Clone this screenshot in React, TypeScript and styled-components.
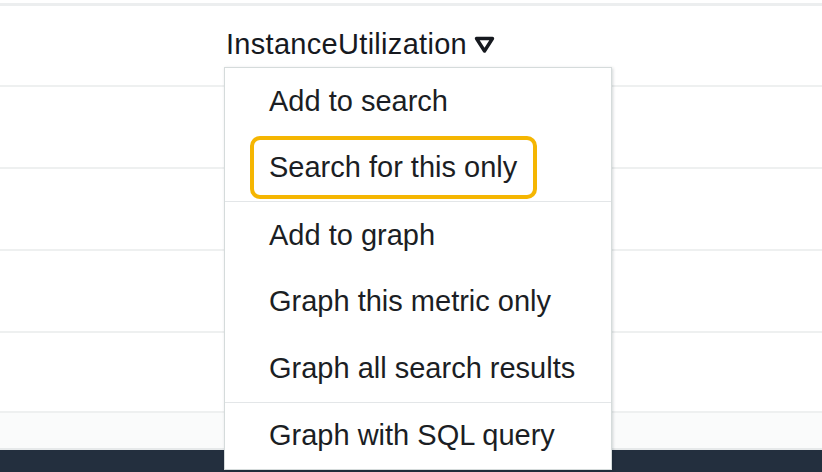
import styled, { createGlobalStyle } from "styled-components";

const GlobalStyle = createGlobalStyle`
  html, body {
    margin: 0;
    padding: 0;
    background: #ffffff;
  }

  body {
    font-family: "Liberation Sans", Arial, Helvetica, sans-serif;
    color: #16191f;
  }
`;

const MENU_GROUPS = [
  ["Add to search", "Search for this only"],
  ["Add to graph", "Graph this metric only", "Graph all search results"],
  ["Graph with SQL query"],
];

const FOCUSED = "Search for this only";

const SortIcon = () => (
  <svg width="21" height="18" viewBox="0 0 21 18" aria-hidden="true">
    <path
      d="M2.5 2.5 H18.5 L10.5 15 Z"
      fill="none"
      stroke="currentColor"
      strokeWidth="3.4"
      strokeLinejoin="round"
    />
  </svg>
);

const App = () => {
  return (
    <Page>
      <GlobalStyle />
      <Table>
        <HeaderRow>
          <ColumnTitle>
            InstanceUtilization
            <SortIcon />
          </ColumnTitle>
        </HeaderRow>
        <Row />
        <Row />
        <Row />
        <Row $height={78} />
        <Row $shaded $fill />
      </Table>
      <Footer />

      <Menu role="menu">
        {MENU_GROUPS.map((group, i) => (
          <MenuGroup key={i} $first={i === 0}>
            {group.map((label) =>
              label === FOCUSED ? (
                <MenuItem key={label} role="menuitem" $focused>
                  <FocusRing>{label}</FocusRing>
                </MenuItem>
              ) : (
                <MenuItem key={label} role="menuitem">
                  {label}
                </MenuItem>
              )
            )}
          </MenuGroup>
        ))}
      </Menu>
    </Page>
  );
};

const Page = styled.div`
  position: relative;
  width: 822px;
  height: 472px;
  padding-top: 3px;
  box-sizing: border-box;
  display: flex;
  flex-direction: column;
  overflow: hidden;
`;

const Table = styled.div`
  flex: 1;
  display: flex;
  flex-direction: column;
  border-top: 3px solid #eceeef;
`;

const HeaderRow = styled.div`
  height: 79px;
  flex-shrink: 0;
  display: flex;
  align-items: center;
  padding-left: 226px;
  border-bottom: 2px solid #eef0f0;
`;

const ColumnTitle = styled.div`
  display: flex;
  align-items: center;
  gap: 7px;
  font-size: 29px;
  letter-spacing: 0.3px;
  color: #16191f;
  margin-top: -2px;

  svg {
    margin-top: 1px;
  }
`;

const Row = styled.div<{ $height?: number; $shaded?: boolean; $fill?: boolean }>`
  height: ${(p) => (p.$fill ? "auto" : `${p.$height ?? 80}px`)};
  flex: ${(p) => (p.$fill ? 1 : "0 0 auto")};
  background: ${(p) => (p.$shaded ? "#fafbfb" : "#ffffff")};
  border-bottom: 2px solid ${(p) => (p.$shaded ? "#e6e9ea" : "#eef0f0")};
`;

const Footer = styled.div`
  height: 22px;
  flex-shrink: 0;
  background: #232f3e;
`;

const Menu = styled.div`
  position: absolute;
  left: 224px;
  top: 67px;
  width: 388px;
  box-sizing: border-box;
  background: #ffffff;
  border: 1px solid #d5dbdb;
  box-shadow: 1px 1px 3px rgba(0, 28, 36, 0.18);
  z-index: 2;
`;

const MenuGroup = styled.div<{ $first?: boolean }>`
  border-top: ${(p) => (p.$first ? "none" : "1px solid #e3e6e8")};
`;

const MenuItem = styled.div<{ $focused?: boolean }>`
  height: 66.5px;
  display: flex;
  align-items: center;
  padding-left: ${(p) => (p.$focused ? "25px" : "44px")};
  font-size: 29px;
  color: #1b1e24;
  white-space: nowrap;
`;

const FocusRing = styled.span`
  display: inline-flex;
  align-items: center;
  height: 63px;
  box-sizing: border-box;
  padding: 0 16px 0 15px;
  border: 4px solid #f5b602;
  border-radius: 10px;
`;

export default App;
